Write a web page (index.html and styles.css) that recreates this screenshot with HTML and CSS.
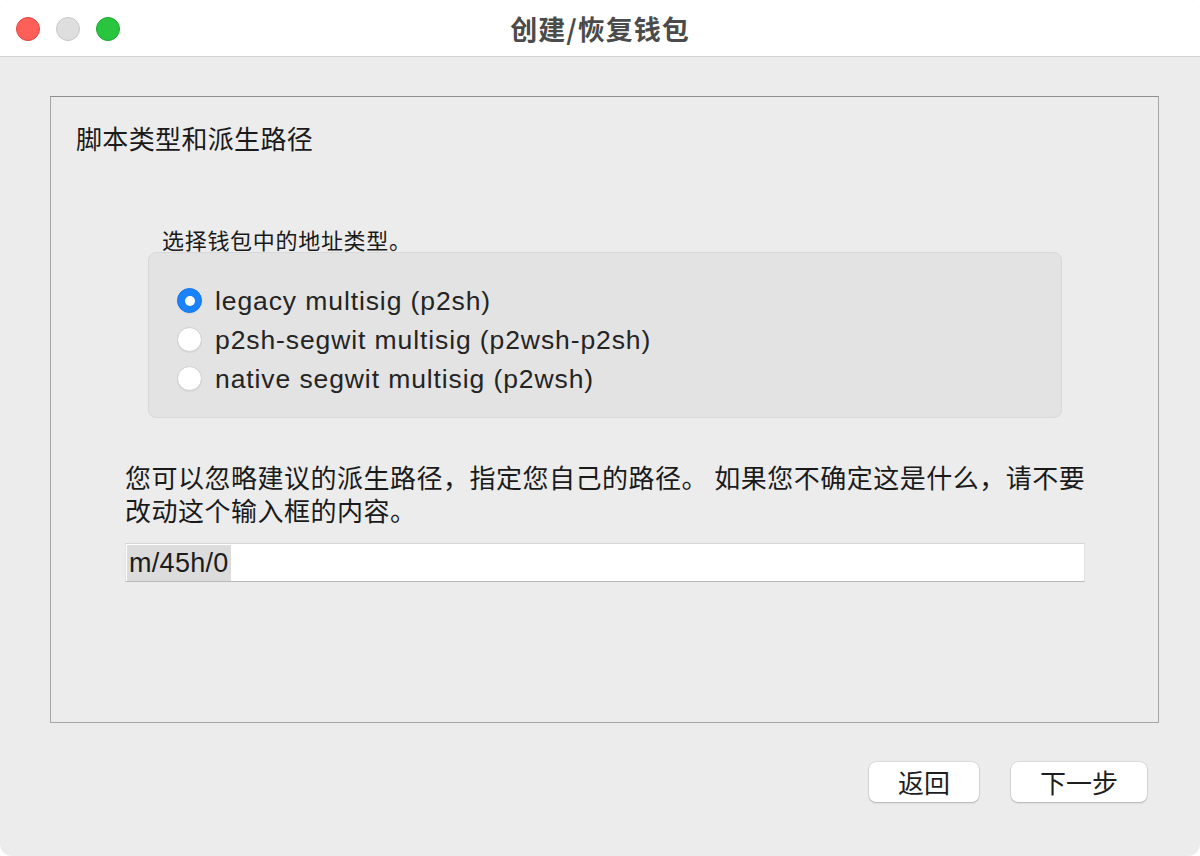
FILE: index.html
```html
<!DOCTYPE html>
<html lang="zh-CN">
<head>
<meta charset="utf-8">
<title>创建/恢复钱包</title>
<link rel="stylesheet" href="styles.css">
</head>
<body>
<div class="window">
  <header class="titlebar">
    <div class="lights">
      <span class="light red"></span>
      <span class="light gray"></span>
      <span class="light green"></span>
    </div>
    <div class="title">创建/恢复钱包</div>
    <div></div>
  </header>
  <main class="content">
    <section class="panel">
      <h1 class="heading">脚本类型和派生路径</h1>
      <div class="group-wrap">
        <div class="group-label">选择钱包中的地址类型。</div>
        <div class="group">
          <div class="radio-row"><span class="radio checked"></span><span class="radio-text">legacy multisig (p2sh)</span></div>
          <div class="radio-row"><span class="radio"></span><span class="radio-text">p2sh-segwit multisig (p2wsh-p2sh)</span></div>
          <div class="radio-row"><span class="radio"></span><span class="radio-text">native segwit multisig (p2wsh)</span></div>
        </div>
      </div>
      <div class="path-wrap">
        <p class="desc">您可以忽略建议的派生路径，指定您自己的路径。 如果您不确定这是什么，请不要<br>改动这个输入框的内容。</p>
        <div class="input"><span class="sel">m/45h/0</span></div>
      </div>
    </section>
    <footer class="buttons">
      <button class="btn btn-back">返回</button>
      <button class="btn btn-next">下一步</button>
    </footer>
  </main>
</div>
</body>
</html>
```

FILE: styles.css
```css
html, body {
  margin: 0;
  padding: 0;
  background: #ffffff;
}
body {
  font-family: "Liberation Sans", "Noto Sans CJK SC", sans-serif;
  color: #1e1e1e;
}
.window {
  width: 1200px;
  height: 856px;
  background: #ececec;
  border-radius: 12px;
  overflow: hidden;
  display: flex;
  flex-direction: column;
}
.titlebar {
  height: 56px;
  flex: 0 0 56px;
  background: #ffffff;
  border-bottom: 1px solid #d2d2d2;
  display: grid;
  grid-template-columns: 1fr auto 1fr;
  align-items: center;
}
.lights {
  display: flex;
  gap: 16px;
  padding-left: 16px;
  padding-top: 2px;
}
.light {
  width: 22px;
  height: 22px;
  border-radius: 50%;
  display: block;
}
.red { background: #fe5f57; border: 1px solid #e2463f; }
.gray { background: #dedede; border: 1px solid #c8c8c8; }
.green { background: #2ac53f; border: 1px solid #1ea62f; }
.title {
  font-family: "Noto Sans CJK SC", sans-serif;
  font-weight: bold;
  font-size: 27px;
  letter-spacing: 1px;
  color: #4b4b4b;
  padding-top: 1px;
}
.content {
  flex: 1;
  padding: 39px 41px 0 50px;
  display: flex;
  flex-direction: column;
}
.panel {
  height: 627px;
  box-sizing: border-box;
  border: 1px solid #a6a6a6;
  border-top-color: #8f8f8f;
  padding: 25px 0 0 25px;
}
.heading {
  margin: 0;
  font-family: "Noto Sans CJK SC", sans-serif;
  font-weight: normal;
  font-size: 26px;
  letter-spacing: 0.35px;
  line-height: 32px;
  color: #1a1a1a;
}
.group-wrap {
  margin: 72px 0 0 72px;
  width: 914px;
}
.group-label {
  font-family: "Noto Sans CJK SC", sans-serif;
  font-size: 22px;
  letter-spacing: 0.7px;
  line-height: 26px;
  padding-left: 14px;
  color: #1a1a1a;
}
.group {
  height: 166px;
  box-sizing: border-box;
  background: #e3e3e3;
  border: 1px solid #d8d8d8;
  border-radius: 8px;
  padding: 28px 0 0 28px;
}
.radio-row {
  height: 39px;
  display: flex;
  align-items: center;
  gap: 13px;
}
.radio {
  width: 25px;
  height: 25px;
  box-sizing: border-box;
  border-radius: 50%;
  background: #ffffff;
  border: 1px solid #cfcfcf;
  box-shadow: 0 1px 1px rgba(0,0,0,0.06);
  display: flex;
  align-items: center;
  justify-content: center;
}
.radio.checked {
  background: #1a82fb;
  border-color: #1475e8;
}
.radio.checked::after {
  content: "";
  width: 10px;
  height: 10px;
  border-radius: 50%;
  background: #ffffff;
}
.radio-text {
  font-size: 26.5px;
  letter-spacing: 0.9px;
  color: #242424;
  line-height: 30px;
}
.path-wrap {
  margin: 42px 0 0 49px;
  width: 980px;
}
.desc {
  margin: 0;
  font-family: "Noto Sans CJK SC", sans-serif;
  font-size: 26px;
  letter-spacing: 0.5px;
  line-height: 33px;
  color: #1a1a1a;
}
.input {
  margin-top: 17px;
  width: 960px;
  height: 39px;
  box-sizing: border-box;
  background: #ffffff;
  border-top: 1px solid #d6d6d6;
  border-left: 1px solid #e2e2e2;
  border-right: 1px solid #e2e2e2;
  border-bottom: 1px solid #b9b9b9;
  padding: 1px 0 0 1px;
  display: flex;
  align-items: flex-start;
}
.sel {
  background: #dcdcdc;
  font-size: 27px;
  letter-spacing: 0.3px;
  line-height: 36px;
  padding: 0 2px 0 2px;
  color: #1c1c1c;
}
.buttons {
  display: flex;
  justify-content: flex-end;
  gap: 32px;
  padding: 39px 12px 0 0;
}
.btn {
  height: 40px;
  background: #ffffff;
  border: none;
  border-radius: 7px;
  box-shadow: 0 0 0 0.5px rgba(0,0,0,0.12), 0 1px 2px rgba(0,0,0,0.2);
  font-family: "Noto Sans CJK SC", sans-serif;
  font-size: 26px;
  color: #1e1e1e;
  padding: 0;
  line-height: 38px;
}
.btn-back { width: 110px; }
.btn-next { width: 136px; }
```
